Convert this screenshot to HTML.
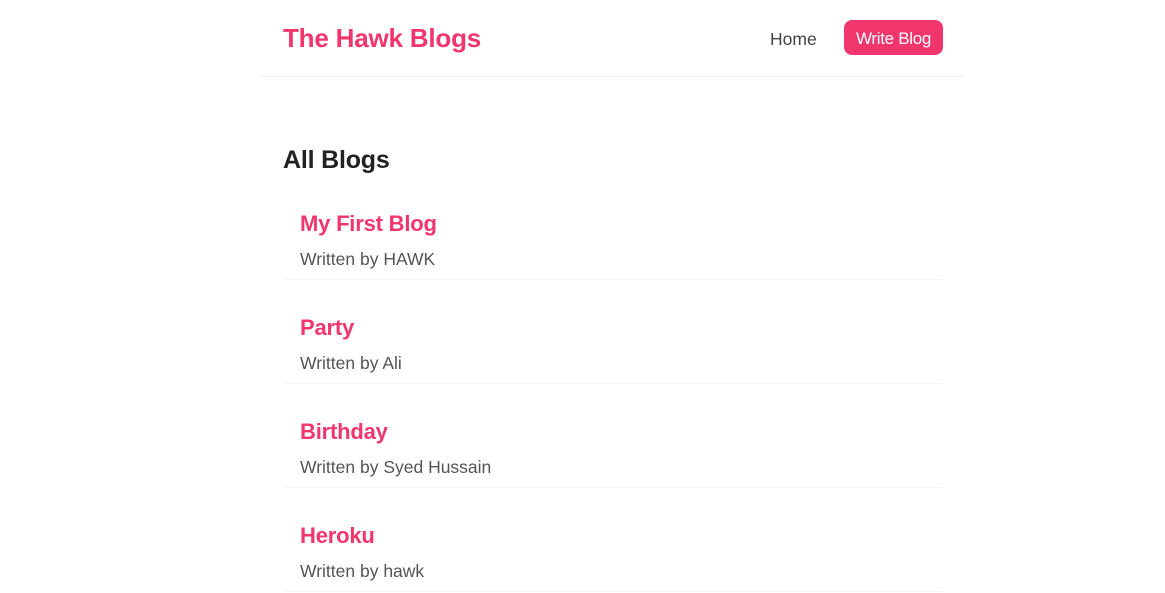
<!DOCTYPE html>
<html><head><meta charset="utf-8"><style>
*{margin:0;padding:0;box-sizing:border-box}
body{width:1165px;height:593px;background:#fff;font-family:"Liberation Sans",sans-serif;color:#333;position:relative;overflow:hidden}
.nav{position:absolute;left:260px;top:0;width:705px;height:77px;border-bottom:1px solid #f2f2f2}
.logo{position:absolute;left:23px;top:23px;font-size:26px;font-weight:bold;color:#f1356d;letter-spacing:-0.2px}
.home{position:absolute;left:510px;top:29px;font-size:17.5px;color:#444}
.wb{position:absolute;left:584px;top:20px;width:99px;height:35px;border-radius:8px;background:#f1356d;color:#fff;font-size:17px;text-align:center;line-height:37px;letter-spacing:-0.3px}
h1{position:absolute;left:283px;top:146px;font-size:25px;font-weight:bold;color:#222;letter-spacing:-0.2px}
.p{position:absolute;left:283px;width:660px;height:84px;border-bottom:1px solid #f5f5f5}
.p h2{position:absolute;left:17px;top:15px;font-size:22px;color:#f1356d;letter-spacing:-0.2px}
.p div{position:absolute;left:17px;top:53px;font-size:17.5px;color:#555}
</style></head><body>
<div class="nav"><div class="logo">The Hawk Blogs</div><div class="home">Home</div><div class="wb">Write Blog</div></div>
<h1>All Blogs</h1>
<div class="p" style="top:196px"><h2>My First Blog</h2><div>Written by HAWK</div></div>
<div class="p" style="top:300px"><h2>Party</h2><div>Written by Ali</div></div>
<div class="p" style="top:404px"><h2>Birthday</h2><div>Written by Syed Hussain</div></div>
<div class="p" style="top:508px"><h2>Heroku</h2><div>Written by hawk</div></div>
</body></html>
